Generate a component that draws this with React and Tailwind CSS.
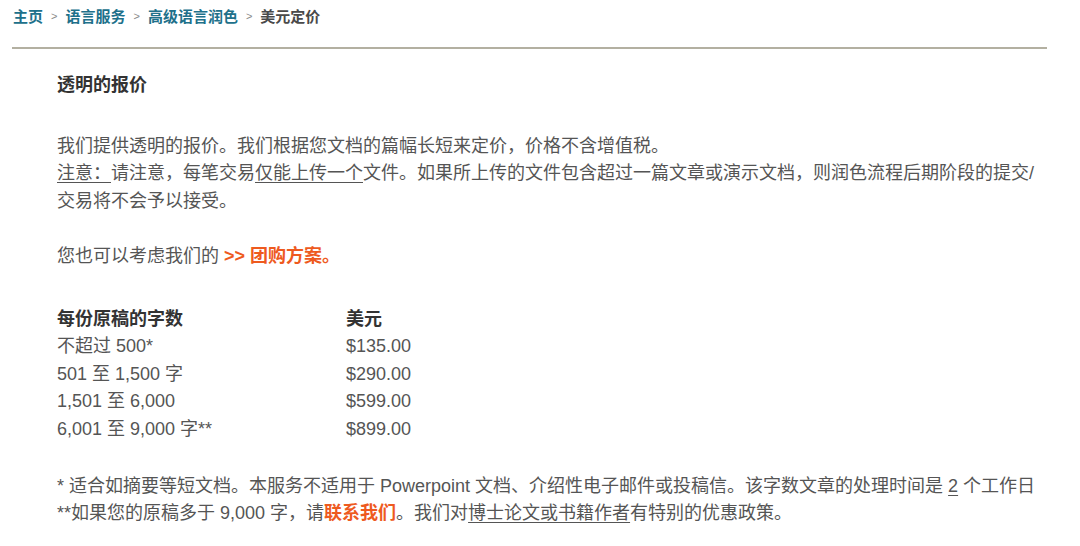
import React from 'react'

const crumbs = ['主页', '语言服务', '高级语言润色']

const rows = [
  ['不超过 500*', '$135.00'],
  ['501 至 1,500 字', '$290.00'],
  ['1,501 至 6,000', '$599.00'],
  ['6,001 至 9,000 字**', '$899.00'],
]

function Breadcrumb() {
  return (
    <nav className="flex items-center h-[34px] pl-[13px] text-[15px] font-bold">
      {crumbs.map((c) => (
        <React.Fragment key={c}>
          <a className="text-[#20708a]">{c}</a>
          <span className="mx-[8px] text-[11px] font-normal text-[#8a8a8a]">&gt;</span>
        </React.Fragment>
      ))}
      <span className="text-[#4a4a4a]">美元定价</span>
    </nav>
  )
}

export default function App() {
  return (
    <div
      className="w-[1080px] h-[546px] bg-white overflow-hidden text-[#555] text-[18px] leading-[27.5px]"
      style={{ fontFamily: '"Liberation Sans", "Noto Sans CJK SC", sans-serif' }}
    >
      <Breadcrumb />
      <div className="ml-[12px] mr-[33px] mt-[13px] h-[2px] bg-[#b3b0a1]" />

      <div className="pl-[57px] whitespace-nowrap">
        <h2 className="mt-[23px] text-[18px] font-bold text-[#333]">透明的报价</h2>

        <p className="mt-[33px]">
          我们提供透明的报价。我们根据您文档的篇幅长短来定价，价格不含增值税。
          <br />
          <span className="underline underline-offset-[3px]">注意：</span>请注意，每笔交易
          <span className="underline underline-offset-[3px]">仅能上传一个</span>
          文件。如果所上传的文件包含超过一篇文章或演示文档，则润色流程后期阶段的提交/
          <br />
          交易将不会予以接受。
        </p>

        <p className="mt-[27.5px]">
          您也可以考虑我们的 <a className="font-bold text-[#ee5a1e]">&gt;&gt; 团购方案。</a>
        </p>

        <div className="mt-[35.5px] grid grid-cols-[289px_auto] w-fit">
          <div className="font-bold text-[#333]">每份原稿的字数</div>
          <div className="font-bold text-[#333]">美元</div>
          {rows.map(([a, b]) => (
            <React.Fragment key={a}>
              <div>{a}</div>
              <div>{b}</div>
            </React.Fragment>
          ))}
        </div>

        <p className="mt-[29.5px]">
          * 适合如摘要等短文档。本服务不适用于 Powerpoint 文档、介绍性电子邮件或投稿信。该字数文章的处理时间是{' '}
          <span className="underline underline-offset-[3px]">2</span> 个工作日
          <br />
          **如果您的原稿多于 9,000 字，请<a className="font-bold text-[#ee5a1e]">联系我们</a>。我们对
          <span className="underline underline-offset-[3px]">博士论文或书籍作者</span>有特别的优惠政策。
        </p>
      </div>
    </div>
  )
}
